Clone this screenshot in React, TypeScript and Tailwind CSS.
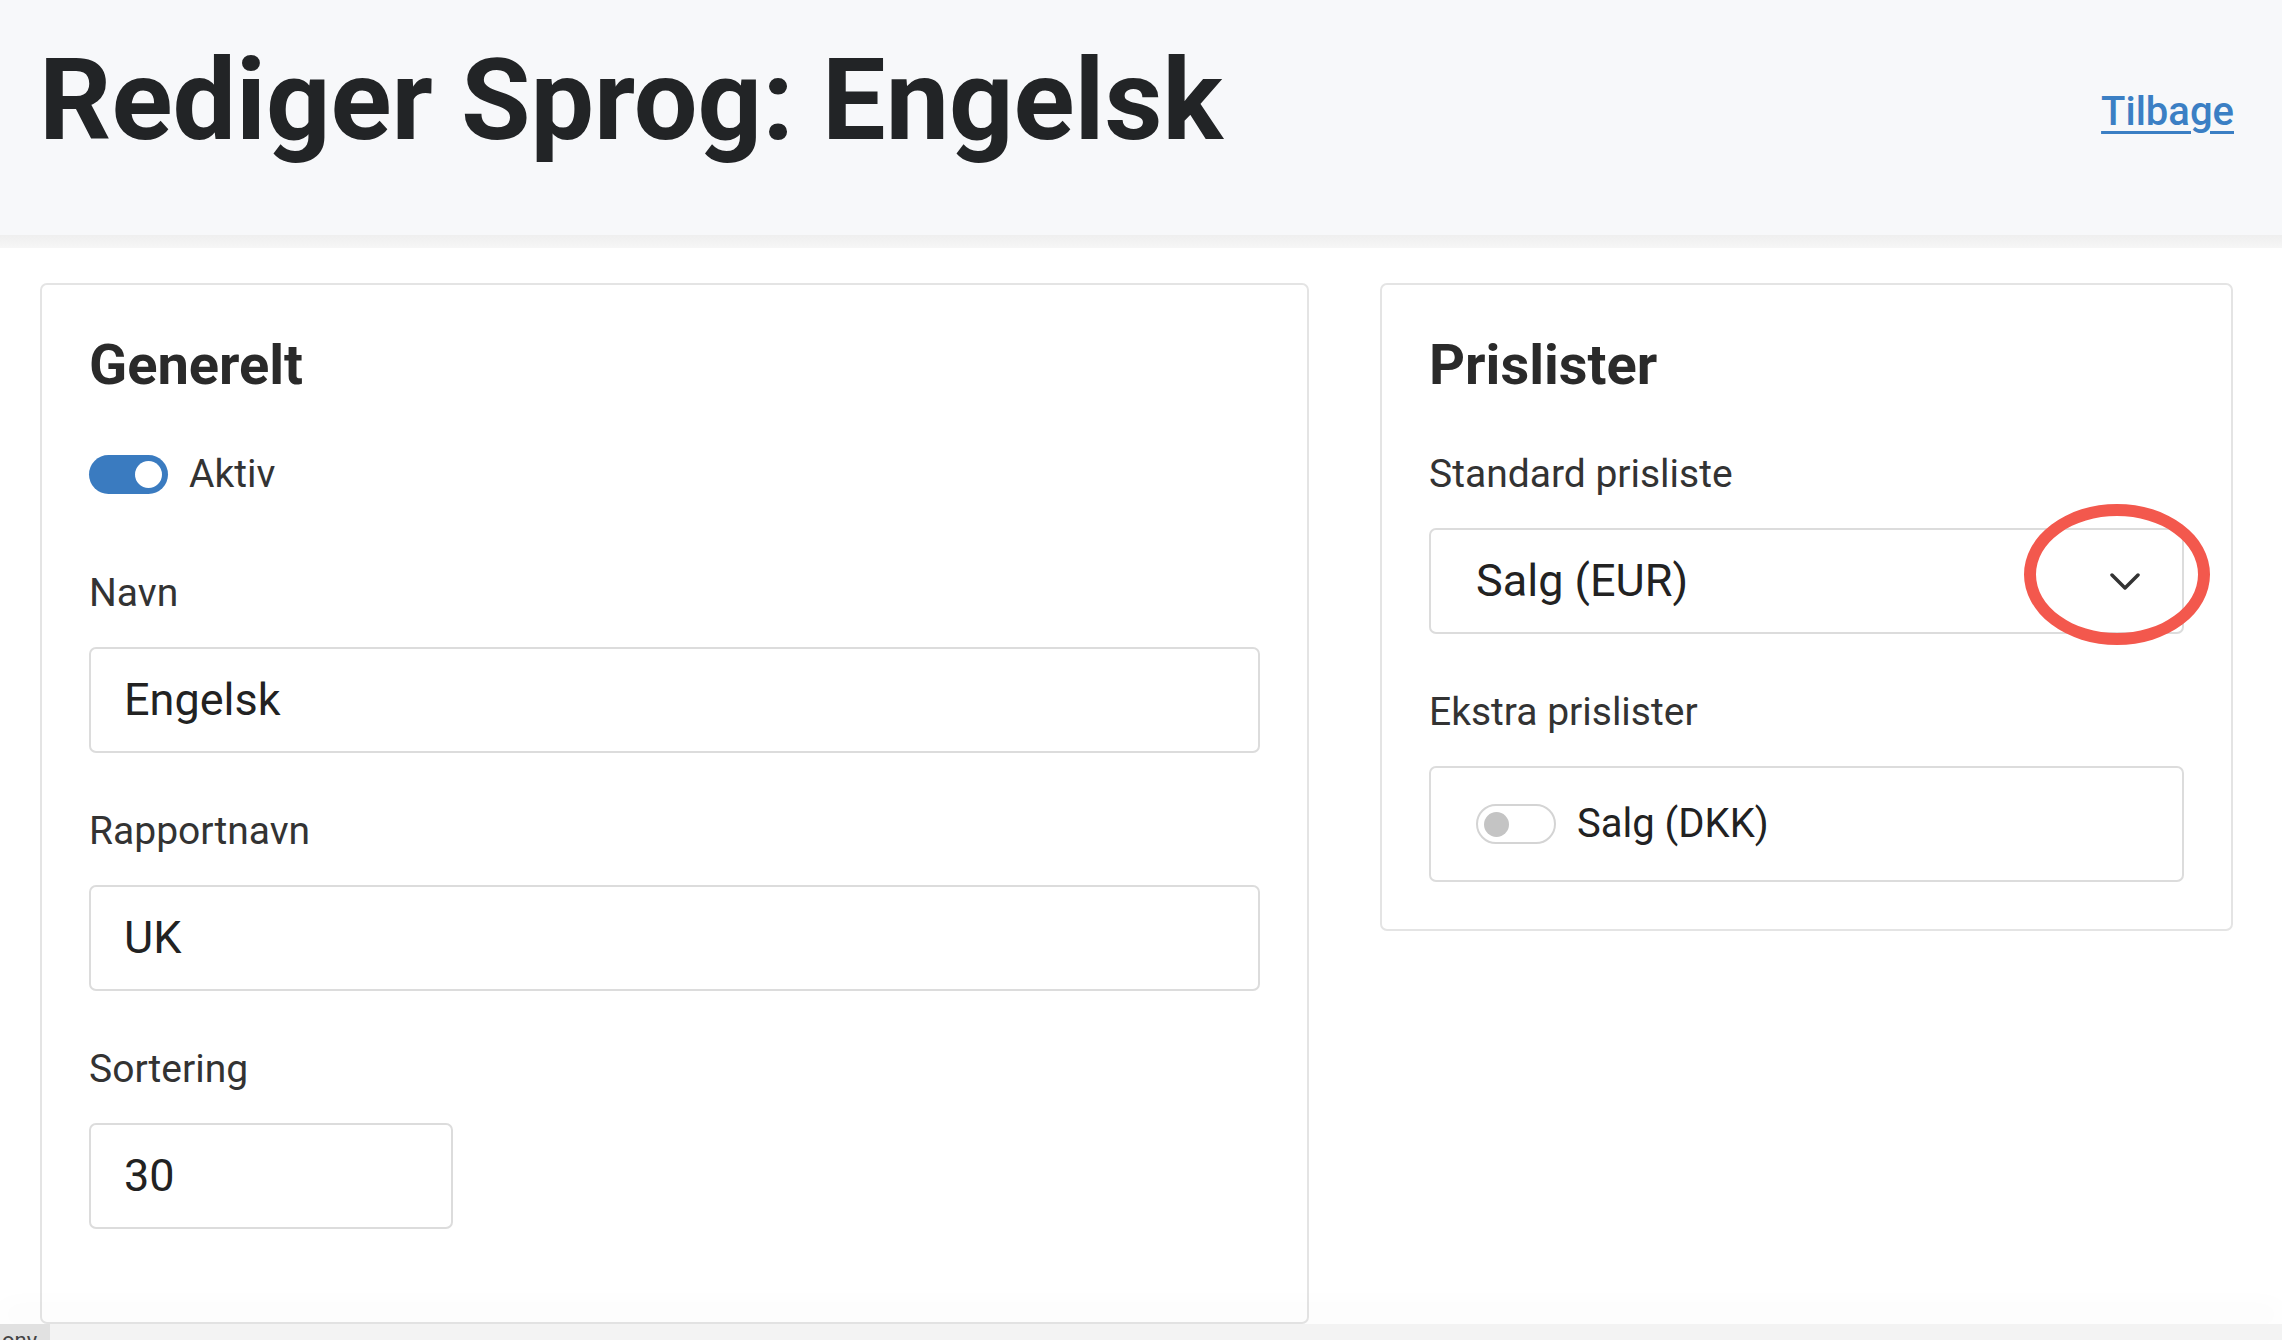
import React from "react"

function Toggle({ on }: { on: boolean }) {
	if (on) {
		return (
			<span className="flex h-[39px] w-[79px] shrink-0 items-center justify-end rounded-full bg-[#3a7bc0] pr-[6px]">
				<span className="size-[27px] rounded-full bg-white" />
			</span>
		)
	}
	return (
		<span className="flex h-[40px] w-[80px] shrink-0 items-center rounded-full border-2 border-[#d4d4d4] bg-white pl-[6px]">
			<span className="size-[25px] rounded-full bg-[#c4c4c4]" />
		</span>
	)
}

function Label({ children }: { children: React.ReactNode }) {
	return <div className="mb-[27px] text-[39px] leading-[54px] text-[#333]">{children}</div>
}

function TextField({ label, value, narrow }: { label: string; value: string; narrow?: boolean }) {
	return (
		<div className="mb-[51px] last:mb-[45px]">
			<Label>{label}</Label>
			<div
				className={
					"flex h-[106px] items-center rounded-[7px] border-2 border-[#dcdcdc] bg-white px-[33px] text-[45px] text-[#222] " +
					(narrow ? "w-[364px]" : "w-full")
				}
			>
				{value}
			</div>
		</div>
	)
}

export default function App() {
	return (
		<div className="flex h-[1340px] w-full flex-col overflow-hidden bg-white font-['Roboto',sans-serif]">
			<header className="flex h-[235px] shrink-0 items-start justify-between bg-[#f7f8fa] pl-[39px] pr-[48px] pt-[33px]">
				<h1 className="text-[113px] font-bold leading-[1.2] text-[#222426]">Rediger Sprog: Engelsk</h1>
				<a
					href="#"
					className="mt-[49px] text-[40px] font-medium leading-[1.5] text-[#3b7fc4] underline decoration-[3px] underline-offset-[6px]"
				>
					Tilbage
				</a>
			</header>
			<div className="h-[13px] shrink-0 bg-gradient-to-b from-[#efefef] to-[#f6f6f6]" />

			<main className="flex-1 pl-[40px] pr-[49px] pt-[35px]">
				<div className="grid grid-cols-[1269px_853px] items-start gap-[71px]">
					<section className="rounded-[7px] border-2 border-[#e4e4e4] p-[47px] pb-[48px]">
						<h2 className="mb-[48px] text-[56px] font-bold leading-[1.2] text-[#2a2a2a]">Generelt</h2>
						<div className="mb-[65px] flex h-[54px] items-center gap-[21px]">
							<Toggle on />
							<span className="text-[39px] text-[#333]">Aktiv</span>
						</div>
						<TextField label="Navn" value="Engelsk" />
						<TextField label="Rapportnavn" value="UK" />
						<TextField label="Sortering" value="30" narrow />
					</section>

					<section className="rounded-[7px] border-2 border-[#e4e4e4] p-[47px]">
						<h2 className="mb-[48px] text-[56px] font-bold leading-[1.2] text-[#2a2a2a]">Prislister</h2>
						<div className="mb-[51px]">
							<Label>Standard prisliste</Label>
							<div className="relative flex h-[106px] items-center justify-between rounded-[7px] border-2 border-[#dcdcdc] bg-white pl-[45px] pr-[42px] text-[45px] text-[#222]">
								<span>Salg (EUR)</span>
								<svg width="30" height="17" viewBox="0 0 30 17" fill="none">
									<polyline
										points="2,2 15,15 28,2"
										stroke="#333"
										strokeWidth="3.5"
										strokeLinecap="round"
										strokeLinejoin="round"
									/>
								</svg>
								<span className="pointer-events-none absolute right-[-28px] top-[-26px] h-[141px] w-[186px] rounded-[50%] border-[12px] border-[#f3584d]" />
							</div>
						</div>
						<div>
							<Label>Ekstra prislister</Label>
							<div className="flex h-[116px] items-center gap-[21px] rounded-[7px] border-2 border-[#dcdcdc] bg-white px-[45px]">
								<Toggle on={false} />
								<span className="text-[40px] text-[#222]">Salg (DKK)</span>
							</div>
						</div>
					</section>
				</div>
			</main>

			<footer className="flex h-[17px] shrink-0 bg-[#f3f3f3] shadow-[0_-18px_28px_rgba(0,0,0,0.025)]">
				<div className="h-full w-[50px] overflow-hidden bg-[#e1e1e1] pl-[2px] text-[22px] leading-[34px] text-[#444]">
					ony
				</div>
			</footer>
		</div>
	)
}
